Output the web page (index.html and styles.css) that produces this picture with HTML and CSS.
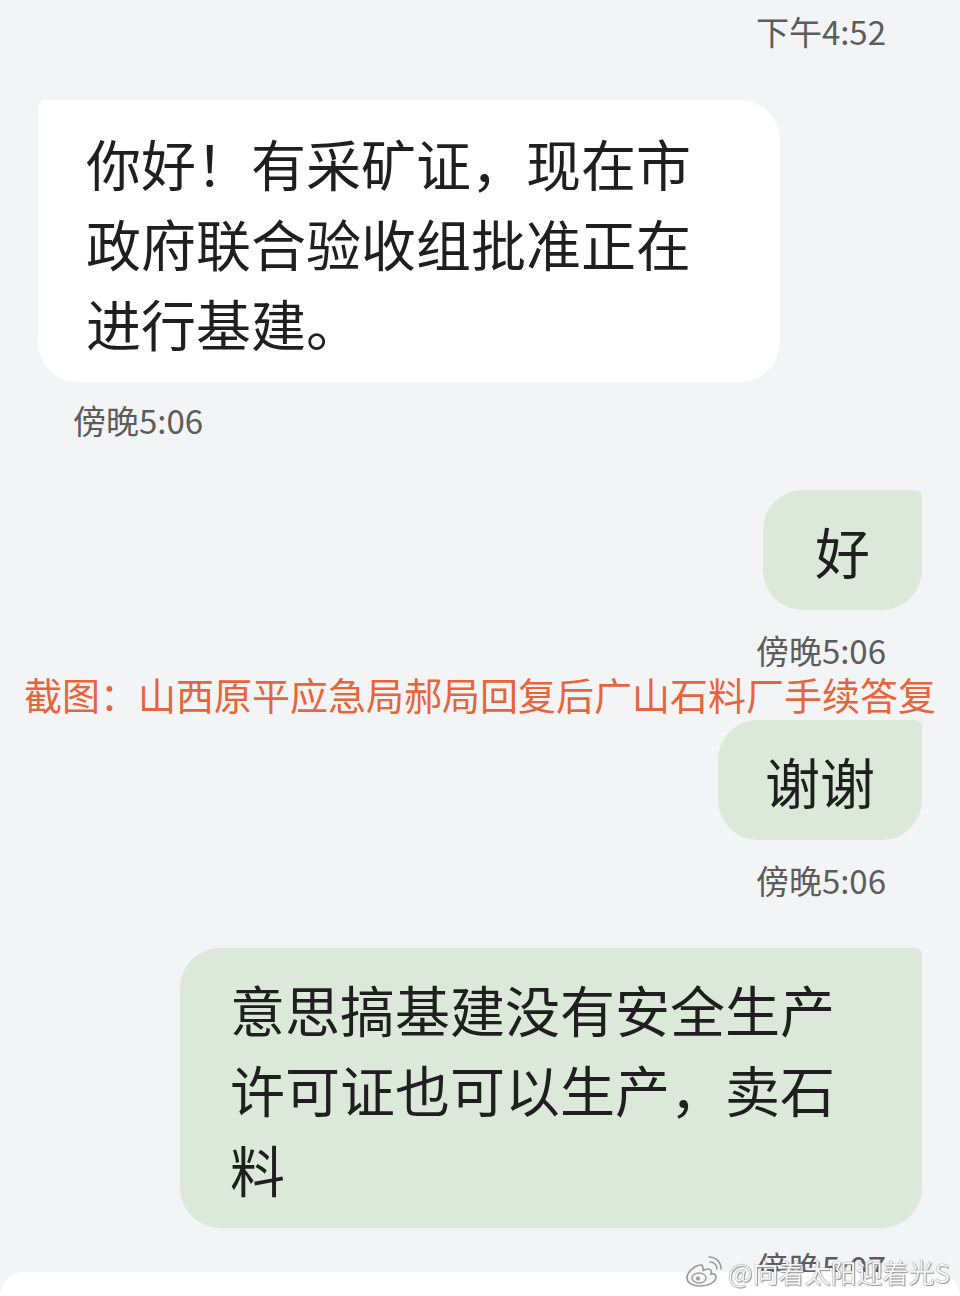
FILE: index.html
```html
<!DOCTYPE html>
<html lang="zh-CN">
<head>
  <meta charset="UTF-8">
  <meta name="viewport" content="width=device-width, initial-scale=1.0">
  <title>短信</title>
  <link rel="stylesheet" href="styles.css">
</head>
<body>
  <main class="chat">
    <div class="time time-right time-first">下午4:52</div>

    <div class="msg msg-in msg-wide">你好！有采矿证，现在市政府联合验收组批准正在进行基建。</div>
    <div class="time time-left">傍晚5:06</div>

    <div class="msg msg-out msg-single">好</div>
    <div class="time time-right">傍晚5:06</div>

    <p class="caption">截图：山西原平应急局郝局回复后广山石料厂手续答复</p>

    <div class="msg msg-out msg-short">谢谢</div>
    <div class="time time-right">傍晚5:06</div>

    <div class="msg msg-out msg-wide msg-long">意思搞基建没有安全生产许可证也可以生产，卖石料</div>
    <div class="time time-right time-last">傍晚5:07</div>
  </main>

  <div class="composer"></div>

  <div class="watermark">
    <svg class="weibo" width="40" height="32" viewBox="0 0 40 32" aria-hidden="true">
      <path d="M16 9c-6 1-13 7-13 13 0 5 6 8 13 8 9 0 16-4 16-9 0-3-3-4-5-3 1-3 0-5-3-5-2 0-4 1-5 2 1-3-1-7-3-6z" fill="#f7f7f7" stroke="#9a9a9a" stroke-width="1.6"/>
      <ellipse cx="15" cy="22" rx="7" ry="5" fill="none" stroke="#9a9a9a" stroke-width="1.4"/>
      <circle cx="14" cy="22.5" r="2" fill="#9a9a9a"/>
      <path d="M26 6c4 0 7 3 7 7" fill="none" stroke="#9a9a9a" stroke-width="1.6" stroke-linecap="round"/>
      <path d="M25 1c7 0 12 5 12 12" fill="none" stroke="#9a9a9a" stroke-width="1.6" stroke-linecap="round"/>
    </svg>
    <span>@向着太阳迎着光S</span>
  </div>
</body>
</html>
```

FILE: styles.css
```css
*, ::before, ::after {
  box-sizing: border-box;
}
html, body {
  height: 1296px;
  overflow: hidden;
}
body {
  margin: 0;
  background: #f3f4f6;
  font-family: "Noto Sans CJK SC", "Noto Sans", sans-serif;
  color: #1f1f1f;
}
.chat {
  display: flex;
  flex-direction: column;
}
.time {
  font-size: 33px;
  line-height: 42px;
  color: #5c5c5c;
}
.time-right {
  align-self: flex-end;
  margin: 19px 74px 0 0;
}
.time-left {
  align-self: flex-start;
  margin: 17px 0 0 73px;
}
.time-first {
  margin-top: 10px;
}
.time-last {
  margin-top: 18px;
}
.msg {
  font-size: 55px;
  line-height: 80px;
}
.msg-in {
  align-self: flex-start;
  margin: 48px 0 0 38px;
  padding: 22px 78px 20px 48px;
  background: #fff;
  border-radius: 6px 40px 40px 40px;
}
.msg-out {
  align-self: flex-end;
  margin: 49px 38px 0 0;
  background: #dce9da;
  border-radius: 40px 6px 40px 40px;
}
.msg-wide {
  width: 742px;
}
.msg-single {
  padding: 20px 52px;
}
.msg-short {
  margin-top: 3px;
  padding: 20px 47px;
}
.msg-long {
  margin-top: 47px;
  padding: 20px 78px 20px 50px;
}
.caption {
  margin: 0;
  text-align: center;
  font-size: 38px;
  line-height: 46px;
  color: #e8643a;
}
.composer {
  position: fixed;
  left: 0;
  right: 0;
  bottom: 0;
  height: 24px;
  background: #fff;
  border-radius: 40px 40px 0 0;
}
.watermark {
  position: fixed;
  right: 10px;
  bottom: 8px;
  display: flex;
  align-items: center;
  gap: 4px;
  font-size: 26px;
  line-height: 32px;
  color: #f6f6f6;
  text-shadow: 0 0 1px #8a8a8a, 0 0 1px #8a8a8a, 1px 1px 1px #9a9a9a;
}
```
